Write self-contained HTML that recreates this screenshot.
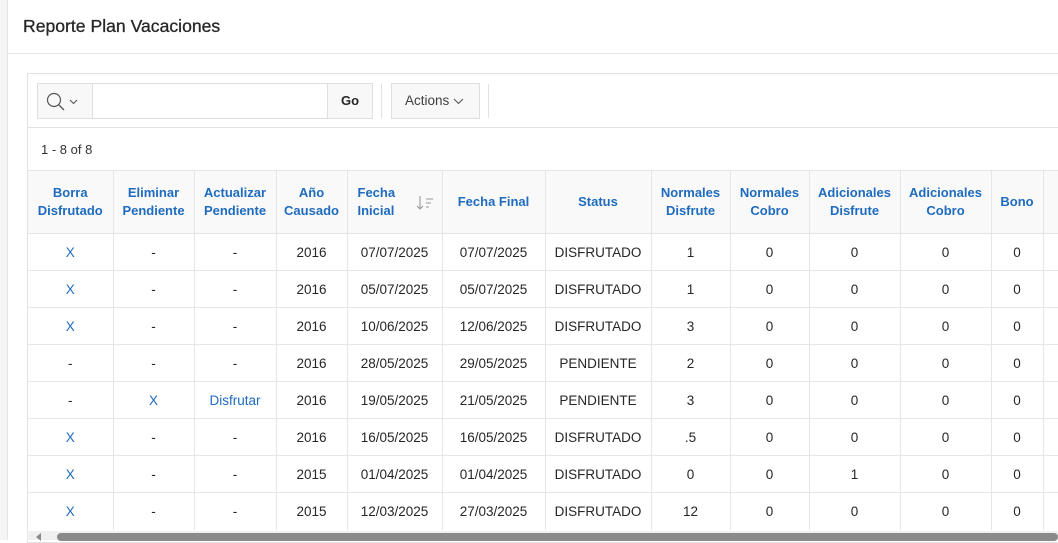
<!DOCTYPE html>
<html><head><style>
*{box-sizing:border-box;margin:0;padding:0}
body{width:1058px;height:540px;overflow:hidden;background:#fff;font-family:"Liberation Sans",sans-serif;color:#262626;position:relative}
.lstrip{position:absolute;left:0;top:0;width:8px;height:540px;background:#f5f5f5;border-right:1px solid #e4e4e4}
.hdr{position:absolute;left:8px;top:0;width:1050px;height:54px;border-bottom:1px solid #e6e6e6}
.hdr h1{position:absolute;left:15px;top:16px;font-size:17.6px;font-weight:normal;color:#262626;-webkit-text-stroke:0.3px #262626}
.box{position:absolute;left:27px;top:73px;width:1040px;height:470px;border:1px solid #e2e2e2;border-right:none}
.tb{position:absolute;left:0;top:0;width:100%;height:54px;border-bottom:1px solid #e2e2e2}
.srch{position:absolute;left:9px;top:9px;width:336px;height:36px;border:1px solid #dfdfdf;background:#f8f8f8}
.srch .ic{position:absolute;left:0;top:0;width:55px;height:34px;border-right:1px solid #dfdfdf}
.srch .in{position:absolute;left:55px;top:0;width:235px;height:34px;background:#fff}
.srch .go{position:absolute;right:0;top:0;width:45px;height:34px;border-left:1px solid #dfdfdf;font-size:13px;font-weight:bold;text-align:center;line-height:34px}
.sep{position:absolute;top:10px;width:1px;height:34px;background:#e2e2e2}
.act{position:absolute;left:363px;top:9px;width:89px;height:36px;border:1px solid #dfdfdf;background:#f8f8f8;font-size:13.5px;line-height:34px;padding-left:13px;color:#404040}
.cnt{position:absolute;left:13px;top:68px;font-size:13px;color:#333}
table{position:absolute;left:0;top:96px;width:1045px;border-collapse:collapse;font-size:13.5px;table-layout:fixed}
th{height:63px;background:#f9f9f9;color:#1e6bbf;font-weight:bold;font-size:13px;line-height:18px;border-right:1px solid #e6e6e6;border-top:1px solid #e6e6e6;text-align:center;padding:0 2px}
td{height:37px;border-right:1px solid #e6e6e6;border-top:1px solid #e6e6e6;text-align:center;color:#262626}
td.l{color:#1e6bbf}
.sb{position:absolute;left:27px;top:531px;width:1031px;height:9px;background:#f0f0f0}
.sb .t{position:absolute;left:30px;top:2px;right:0;height:8px;background:#8a8a8a;border-radius:4px}
.sb .a{position:absolute;left:9px;top:2px;width:0;height:0;border-top:4px solid transparent;border-bottom:4px solid transparent;border-right:5px solid #8a8a8a}
</style></head><body>
<div class="lstrip"></div>
<div class="hdr"><h1>Reporte Plan Vacaciones</h1></div>
<div class="box">
 <div class="tb">
  <div class="srch"><div class="ic"><svg width="55" height="34"><circle cx="16" cy="16" r="6.5" fill="none" stroke="#555" stroke-width="1.2"/><path d="M21 21l5 5" stroke="#555" stroke-width="1.3"/><path d="M32 16l3.5 3.5 3.5-3.5" fill="none" stroke="#555" stroke-width="1.1"/></svg></div><div class="in"></div><div class="go">Go</div></div>
  <div class="sep" style="left:353px"></div>
  <div class="act">Actions <svg width="11" height="8"><path d="M1 2l4.5 4.5L10 2" fill="none" stroke="#555" stroke-width="1.1"/></svg></div>
  <div class="sep" style="left:460px"></div>
 </div>
 <div class="cnt">1 - 8 of 8</div>
 <table>
  <colgroup><col style="width:85px"><col style="width:81px"><col style="width:82px"><col style="width:71px"><col style="width:95px"><col style="width:103px"><col style="width:106px"><col style="width:79px"><col style="width:79px"><col style="width:91px"><col style="width:91px"><col style="width:52px"><col style="width:30px"></colgroup>
  <tr><th>Borra Disfrutado</th><th>Eliminar Pendiente</th><th>Actualizar Pendiente</th><th>Año Causado</th><th style="text-align:left;padding-left:10px;position:relative">Fecha<br>Inicial<svg style="position:absolute;left:68px;top:24px" width="18" height="16"><path d="M4 1v13M1 11l3 3 3-3M10 4h7M10 8h5M10 12h3" fill="none" stroke="#999" stroke-width="1.1"/></svg></th><th>Fecha Final</th><th>Status</th><th>Normales Disfrute</th><th>Normales Cobro</th><th>Adicionales Disfrute</th><th>Adicionales Cobro</th><th>Bono</th><th></th></tr>
  <tr><td class="l">X</td><td>-</td><td>-</td><td>2016</td><td>07/07/2025</td><td>07/07/2025</td><td>DISFRUTADO</td><td>1</td><td>0</td><td>0</td><td>0</td><td>0</td><td></td></tr>
  <tr><td class="l">X</td><td>-</td><td>-</td><td>2016</td><td>05/07/2025</td><td>05/07/2025</td><td>DISFRUTADO</td><td>1</td><td>0</td><td>0</td><td>0</td><td>0</td><td></td></tr>
  <tr><td class="l">X</td><td>-</td><td>-</td><td>2016</td><td>10/06/2025</td><td>12/06/2025</td><td>DISFRUTADO</td><td>3</td><td>0</td><td>0</td><td>0</td><td>0</td><td></td></tr>
  <tr><td>-</td><td>-</td><td>-</td><td>2016</td><td>28/05/2025</td><td>29/05/2025</td><td>PENDIENTE</td><td>2</td><td>0</td><td>0</td><td>0</td><td>0</td><td></td></tr>
  <tr><td>-</td><td class="l">X</td><td class="l">Disfrutar</td><td>2016</td><td>19/05/2025</td><td>21/05/2025</td><td>PENDIENTE</td><td>3</td><td>0</td><td>0</td><td>0</td><td>0</td><td></td></tr>
  <tr><td class="l">X</td><td>-</td><td>-</td><td>2016</td><td>16/05/2025</td><td>16/05/2025</td><td>DISFRUTADO</td><td>.5</td><td>0</td><td>0</td><td>0</td><td>0</td><td></td></tr>
  <tr><td class="l">X</td><td>-</td><td>-</td><td>2015</td><td>01/04/2025</td><td>01/04/2025</td><td>DISFRUTADO</td><td>0</td><td>0</td><td>1</td><td>0</td><td>0</td><td></td></tr>
  <tr><td class="l">X</td><td>-</td><td>-</td><td>2015</td><td>12/03/2025</td><td>27/03/2025</td><td>DISFRUTADO</td><td>12</td><td>0</td><td>0</td><td>0</td><td>0</td><td></td></tr>
 </table>
</div>
<div class="sb"><div class="a"></div><div class="t"></div></div>
</body></html>
